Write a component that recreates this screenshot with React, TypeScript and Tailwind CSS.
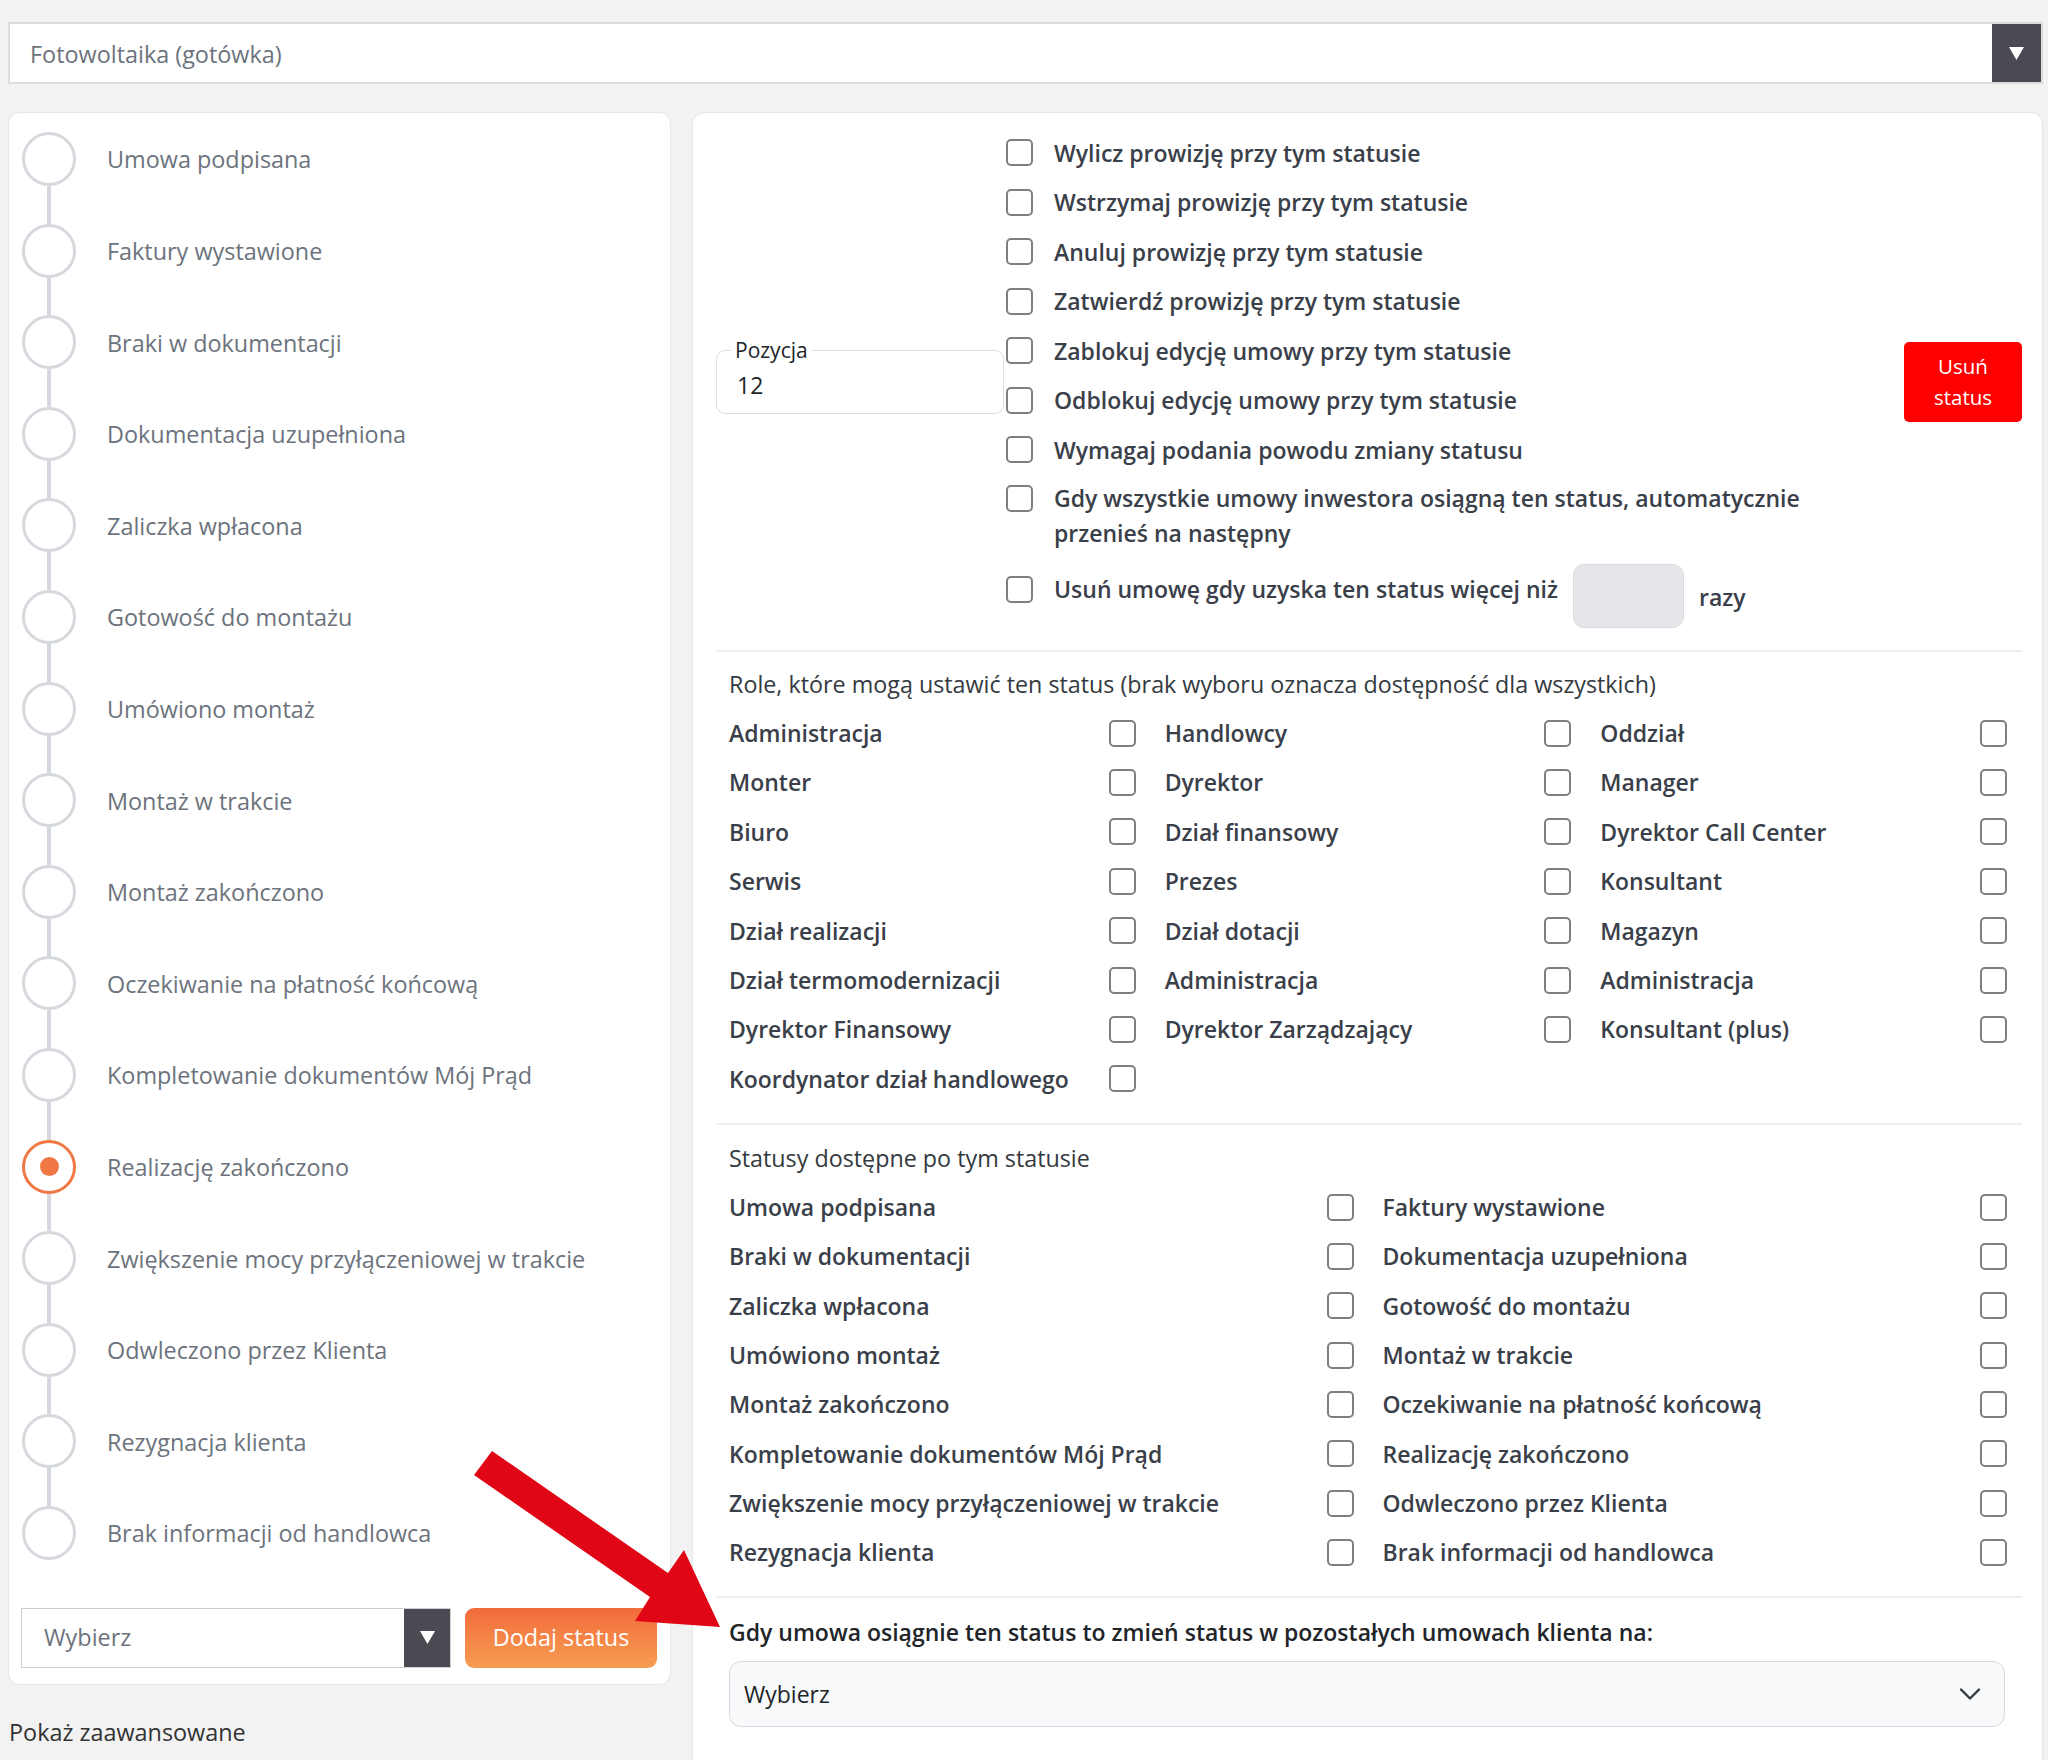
import React from "react";
import { ChevronDown } from "lucide-react";

const timeline = [
  "Umowa podpisana",
  "Faktury wystawione",
  "Braki w dokumentacji",
  "Dokumentacja uzupełniona",
  "Zaliczka wpłacona",
  "Gotowość do montażu",
  "Umówiono montaż",
  "Montaż w trakcie",
  "Montaż zakończono",
  "Oczekiwanie na płatność końcową",
  "Kompletowanie dokumentów Mój Prąd",
  "Realizację zakończono",
  "Zwiększenie mocy przyłączeniowej w trakcie",
  "Odwleczono przez Klienta",
  "Rezygnacja klienta",
  "Brak informacji od handlowca",
];

const ACTIVE = 11;

const options = [
  "Wylicz prowizję przy tym statusie",
  "Wstrzymaj prowizję przy tym statusie",
  "Anuluj prowizję przy tym statusie",
  "Zatwierdź prowizję przy tym statusie",
  "Zablokuj edycję umowy przy tym statusie",
  "Odblokuj edycję umowy przy tym statusie",
  "Wymagaj podania powodu zmiany statusu",
];

const roles = [
  "Administracja",
  "Handlowcy",
  "Oddział",
  "Monter",
  "Dyrektor",
  "Manager",
  "Biuro",
  "Dział finansowy",
  "Dyrektor Call Center",
  "Serwis",
  "Prezes",
  "Konsultant",
  "Dział realizacji",
  "Dział dotacji",
  "Magazyn",
  "Dział termomodernizacji",
  "Administracja",
  "Administracja",
  "Dyrektor Finansowy",
  "Dyrektor Zarządzający",
  "Konsultant (plus)",
  "Koordynator dział handlowego",
];

const nextStatuses = timeline;

const Box = () => (
  <input
    type="checkbox"
    className="appearance-none m-0 w-[27px] h-[27px] shrink-0 rounded-[5px] border-2 border-[#7f7f7f] bg-white"
  />
);

const Triangle = () => (
  <svg width="15" height="13" viewBox="0 0 15 13">
    <polygon points="0,0 15,0 7.5,13" fill="#ffffff" />
  </svg>
);

function Timeline() {
  return (
    <div className="flex flex-col pl-[1px]">
      {timeline.map((s, i) => (
        <div key={s} className="flex">
          <div className="flex flex-col items-center w-[54px]">
            <div
              className={`w-[54px] h-[54px] rounded-full border-[3px] flex items-center justify-center ${
                i === ACTIVE ? "border-[#f07844]" : "border-[#d5d8dd]"
              }`}
            >
              {i === ACTIVE && (
                <div className="w-[19px] h-[19px] rounded-full bg-[#f07844]" />
              )}
            </div>
            {i < timeline.length - 1 && (
              <div className="w-[4px] h-[37.6px] bg-[#d5d8dd]" />
            )}
          </div>
          <div className="ml-[31px] h-[54px] pt-[2px] flex items-center text-[23.4px] text-[#6c737d]">
            {s}
          </div>
        </div>
      ))}
    </div>
  );
}

function LeftColumn() {
  return (
    <div className="w-[663px] shrink-0 flex flex-col">
      <div className="bg-white rounded-[12px] border border-[#e6e6e6] pt-[19px] px-[12px] pb-[16px]">
        <Timeline />
        <div className="mt-[48px] flex gap-[14px]">
          <div className="w-[430px] h-[60px] flex border border-[#cfcfcf] bg-white">
            <div className="flex-1 flex items-center pl-[22px] text-[23.4px] text-[#6c737d]">
              Wybierz
            </div>
            <div className="w-[46px] bg-[#4a4a52] flex items-center justify-center">
              <Triangle />
            </div>
          </div>
          <button className="w-[192px] h-[60px] rounded-[9px] bg-gradient-to-b from-[#f26a3b] to-[#f69d52] text-white text-[23.4px]">
            Dodaj status
          </button>
        </div>
      </div>
      <div className="mt-[29px] ml-[1px] text-[23.4px] leading-[36px] text-[#333333]">
        Pokaż zaawansowane
      </div>
    </div>
  );
}

function TopSection() {
  return (
    <div className="flex items-center">
      <div className="relative mt-[8px] w-[288px] h-[64px] shrink-0 border border-[#dcdfe3] rounded-[9px] flex items-center pt-[6px] pl-[20px] text-[23px] text-[#212529]">
        <span className="absolute -top-[16px] left-[14px] px-[4px] bg-white text-[21px] leading-[30px] text-[#212529]">
          Pozycja
        </span>
        12
      </div>
      <div className="ml-[2px] flex-1 flex flex-col text-[23px] font-semibold text-[#3a4049]">
        {options.map((o) => (
          <div key={o} className="h-[49.5px] flex items-center gap-[21px]">
            <Box />
            <span>{o}</span>
          </div>
        ))}
        <div className="h-[89px] flex items-start gap-[21px] pt-[6.5px]">
          <div className="mt-[4px]">
            <Box />
          </div>
          <span className="leading-[35px]">
            Gdy wszystkie umowy inwestora osiągną ten status, automatycznie
            <br />
            przenieś na następny
          </span>
        </div>
        <div className="h-[64px] flex items-center">
          <div className="flex items-center gap-[21px] -mt-[12px]">
            <Box />
            <span>Usuń umowę gdy uzyska ten status więcej niż</span>
          </div>
          <div className="ml-[15px] w-[111px] h-[64px] rounded-[11px] border border-[#d9dce0] bg-[#e6e7ea]" />
          <span className="ml-[15px] mt-[4px]">razy</span>
        </div>
      </div>
      <button className="mt-[8px] w-[118px] h-[80px] shrink-0 rounded-[5px] bg-[#ff0000] text-white text-[20.5px] leading-[31px]">
        Usuń
        <br />
        status
      </button>
    </div>
  );
}

function CheckGrid({ items, cols }: { items: string[]; cols: 2 | 3 }) {
  return (
    <div
      className={`mt-[7px] w-[1307px] grid ${
        cols === 3 ? "grid-cols-3" : "grid-cols-2"
      }`}
    >
      {items.map((r, i) => (
        <div
          key={r + i}
          className={`${
            cols === 3 ? "h-[49.4px]" : "h-[49.3px]"
          } flex items-center justify-between pr-[29px] text-[23px] font-semibold text-[#3a4049]`}
        >
          <span>{r}</span>
          <Box />
        </div>
      ))}
    </div>
  );
}

function RightCard() {
  return (
    <div className="w-[1351px] shrink-0 h-[1700px] bg-white rounded-t-[12px] border border-[#e6e6e6] pl-[23px] pr-[20px] pt-[15px]">
      <TopSection />
      <div className="mt-[22px] border-t-2 border-[#eceef0]" />
      <div className="pl-[13px]">
        <div className="mt-[14px] text-[23.3px] leading-[36px] text-[#343a40]">
          Role, które mogą ustawić ten status (brak wyboru oznacza dostępność
          dla wszystkich)
        </div>
        <CheckGrid items={roles} cols={3} />
      </div>
      <div className="mt-[19px] border-t-2 border-[#eceef0]" />
      <div className="pl-[13px]">
        <div className="mt-[15px] text-[23.3px] leading-[36px] text-[#343a40]">
          Statusy dostępne po tym statusie
        </div>
        <CheckGrid items={nextStatuses} cols={2} />
      </div>
      <div className="mt-[19px] border-t-2 border-[#eceef0]" />
      <div className="pl-[13px]">
        <div className="mt-[16px] text-[23px] leading-[36px] font-semibold text-[#212529]">
          Gdy umowa osiągnie ten status to zmień status w pozostałych umowach
          klienta na:
        </div>
        <div className="mt-[11px] w-[1276px] h-[66px] rounded-[12px] border border-[#d6d9dd] bg-[#f8f9fa] flex items-center justify-between pl-[14px] pr-[16px] text-[23px] text-[#212529]">
          <span>Wybierz</span>
          <ChevronDown size={36} strokeWidth={1.6} color="#343a40" />
        </div>
      </div>
    </div>
  );
}

export default function App() {
  return (
    <div className="relative w-[2048px] h-[1760px] overflow-hidden bg-[#f2f2f2] font-['Open_Sans',sans-serif] pt-[22px] pl-[8px] pr-[5px]">
      <div className="h-[62px] flex border-2 border-[#dcdcdc] bg-white">
        <div className="flex-1 flex items-center pl-[20px] pt-[4px] text-[23.4px] text-[#6c737d]">
          Fotowoltaika (gotówka)
        </div>
        <div className="w-[49px] bg-[#4a4a52] flex items-center justify-center">
          <Triangle />
        </div>
      </div>
      <div className="mt-[28px] flex gap-[21px]">
        <LeftColumn />
        <RightCard />
      </div>
      <svg
        className="absolute left-[470px] top-[1445px]"
        width="255"
        height="190"
        viewBox="0 0 255 190"
      >
        <polygon
          points="22,6 198,128 214,105 250,182 165,176 180,152 4,30"
          fill="#e10616"
        />
      </svg>
    </div>
  );
}
